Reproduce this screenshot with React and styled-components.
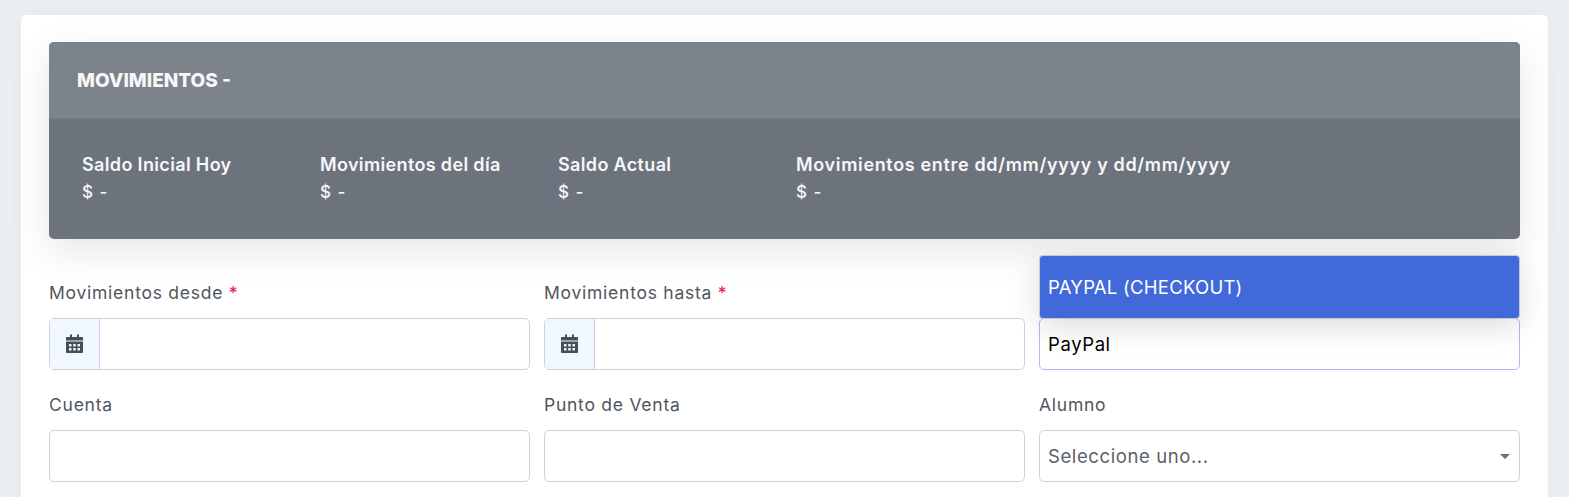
import React from "react";
import styled, { createGlobalStyle } from "styled-components";

const Global = createGlobalStyle`
  html, body { margin: 0; padding: 0; height: 497px; overflow: hidden; background: #ebeff2; }
  body { font-family: Inter, "Open Sans", sans-serif; }
  * { box-sizing: border-box; }
`;
const Page = styled.div`
  padding: 15px 21px 0 21px;
  height: 497px;
  overflow: hidden;
`;
const Card = styled.div`
  background: #fff;
  border-radius: 5px;
  padding: 27px 28px 40px 28px;
  box-shadow: 0 0 20px rgba(0,0,0,.03);
`;
const Panel = styled.section`
  background: #6c737c;
  border-radius: 5px;
  box-shadow: 0 12px 40px rgba(0,0,0,.1);
  overflow: hidden;
`;
const PanelHeader = styled.h2`
  margin: 0;
  height: 77px;
  padding-left: 28px;
  display: flex;
  align-items: center;
  background: #7c838a;
  border-bottom: 1px solid #747b83;
  color: #f6f7f8;
  font-size: 19px;
  font-weight: 800;
`;
const Stats = styled.div`
  height: 120px;
  padding: 34px 33px 0;
  display: grid;
  grid-template-columns: 238px 238px 238px 1fr;
`;
const Stat = styled.div`
  color: #f6f7f8;
`;
const StatTitle = styled.div`
  font-size: 18px;
  font-weight: 600;
  line-height: 24px;
  letter-spacing: ${p => (p.$wide ? "0.66px" : "0.35px")};
`;
const StatValue = styled.div`
  font-size: 17px;
  font-weight: 500;
  line-height: 24px;
  letter-spacing: 1px;
  margin-top: 3px;
`;
const Form = styled.div`
  margin-top: 41px;
  display: grid;
  grid-template-columns: repeat(3, 481px);
  column-gap: 14px;
  row-gap: 22px;
`;
const Field = styled.div`
  position: relative;
  min-width: 0;
`;
const Label = styled.label`
  display: block;
  height: 24px;
  line-height: 24px;
  margin-top: 1px;
  margin-bottom: 13px;
  font-size: 17.5px;
  letter-spacing: 0.75px;
  color: #50565e;
`;
const Required = styled.span`
  color: #e8174f;
`;
const InputBox = styled.div`
  height: 52px;
  display: flex;
  align-items: center;
  border: 1px solid ${p => (p.$focus ? "#a9bcec" : "#ced2da")};
  border-radius: 5px;
  background: #fff;
  overflow: hidden;
`;
const Addon = styled.span`
  width: 50px;
  height: 100%;
  flex: none;
  display: flex;
  align-items: center;
  justify-content: center;
  background: #f0f7fe;
  border-right: 1px solid #ced2da;
  color: #474d57;
`;
const Value = styled.span`
  padding-left: 8px;
  font-size: 18.5px;
  letter-spacing: 0.6px;
  color: ${p => (p.$muted ? "#5b6068" : "#000")};
`;
const Caret = styled.span`
  margin-left: auto;
  margin-right: 9px;
  width: 0;
  height: 0;
  border-left: 5px solid transparent;
  border-right: 5px solid transparent;
  border-top: 5px solid #6a7079;
`;
const Dropdown = styled.div`
  position: absolute;
  left: 0;
  right: 0;
  top: -25px;
  height: 64px;
  display: flex;
  align-items: center;
  padding-left: 8px;
  background: #4169da;
  color: #fff;
  font-size: 18.5px;
  letter-spacing: 0.25px;
  border: 1px solid #c4cad6;
  border-radius: 4px;
  box-shadow: 0 8px 30px rgba(0,0,0,.14);
  z-index: 2;
`;

const CalendarIcon = () => (
  <svg width="17" height="20" viewBox="0 0 17 20" fill="currentColor">
    <path d="M4 0.5h2V3h5V0.5h2V3h3a1 1 0 0 1 1 1v2.500H0V4a1 1 0 0 1 1-1h3z" />
    <path fillRule="evenodd" d="M0 7.500h17V18a1 1 0 0 1-1 1H1a1 1 0 0 1-1-1zM3 10v2.500h2.500V10zm4.250 0v2.500h2.500V10zm4.250 0v2.500H14V10zM3 14v2.500h2.500V14zm4.250 0v2.500h2.500V14zm4.250 0v2.500H14V14z" />
  </svg>
);

const stats = [
  { title: "Saldo Inicial Hoy" },
  { title: "Movimientos del día" },
  { title: "Saldo Actual" },
  { title: "Movimientos entre dd/mm/yyyy y dd/mm/yyyy", wide: true },
];

export default function App() {
  return (
    <Page>
      <Global />
      <Card>
        <Panel>
          <PanelHeader>MOVIMIENTOS -</PanelHeader>
          <Stats>
            {stats.map(s => (
              <Stat key={s.title}>
                <StatTitle $wide={s.wide}>{s.title}</StatTitle>
                <StatValue>$ -</StatValue>
              </Stat>
            ))}
          </Stats>
        </Panel>
        <Form>
          <Field>
            <Label>Movimientos desde <Required>*</Required></Label>
            <InputBox><Addon><CalendarIcon /></Addon></InputBox>
          </Field>
          <Field>
            <Label>Movimientos hasta <Required>*</Required></Label>
            <InputBox><Addon><CalendarIcon /></Addon></InputBox>
          </Field>
          <Field>
            <Label />
            <InputBox $focus><Value>PayPal</Value></InputBox>
            <Dropdown>PAYPAL (CHECKOUT)</Dropdown>
          </Field>
          <Field>
            <Label>Cuenta</Label>
            <InputBox />
          </Field>
          <Field>
            <Label>Punto de Venta</Label>
            <InputBox />
          </Field>
          <Field>
            <Label>Alumno</Label>
            <InputBox><Value $muted>Seleccione uno...</Value><Caret /></InputBox>
          </Field>
        </Form>
      </Card>
    </Page>
  );
}
